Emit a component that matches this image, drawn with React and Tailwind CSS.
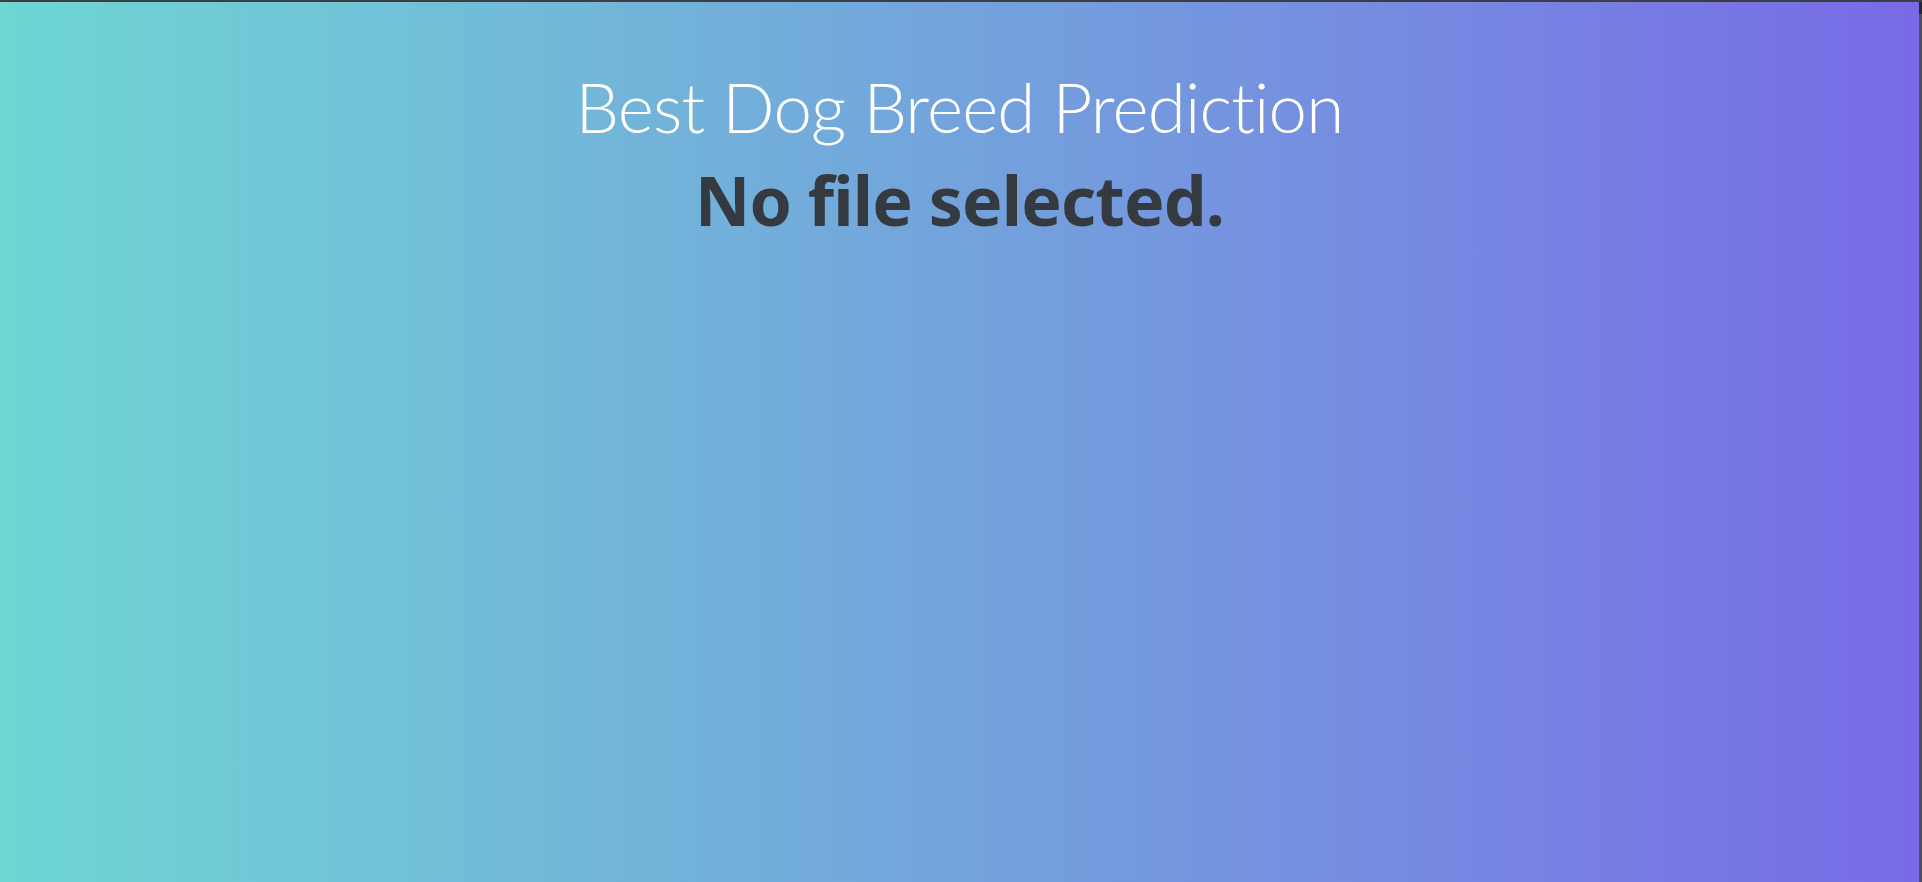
export default function App() {
  return (
    <div className="flex h-[882px] w-full border-t-2 border-[#3d3e43]">
      <div className="flex flex-1 flex-col items-center bg-gradient-to-r from-[#6ed6d3] via-[#73a3dc] to-[#786ae6]">
        <h1
          className="mt-[63px] text-[69px] leading-[83px] font-light tracking-[-0.8px] text-white [font-variant-ligatures:none]"
          style={{ fontFamily: 'Lato, "Noto Sans", sans-serif' }}
        >
          Best Dog Breed Prediction
        </h1>
        <h2
          className="mt-[11px] text-[68px] leading-[82px] font-bold tracking-[-0.85px] text-[#343a40] [font-variant-ligatures:none]"
          style={{ fontFamily: '"Noto Sans", Lato, sans-serif' }}
        >
          No file selected.
        </h2>
      </div>
      <div className="flex w-[3px] flex-col bg-[#4b505c]">
        <div className="h-[12px] bg-[#25272d]" />
      </div>
    </div>
  );
}
